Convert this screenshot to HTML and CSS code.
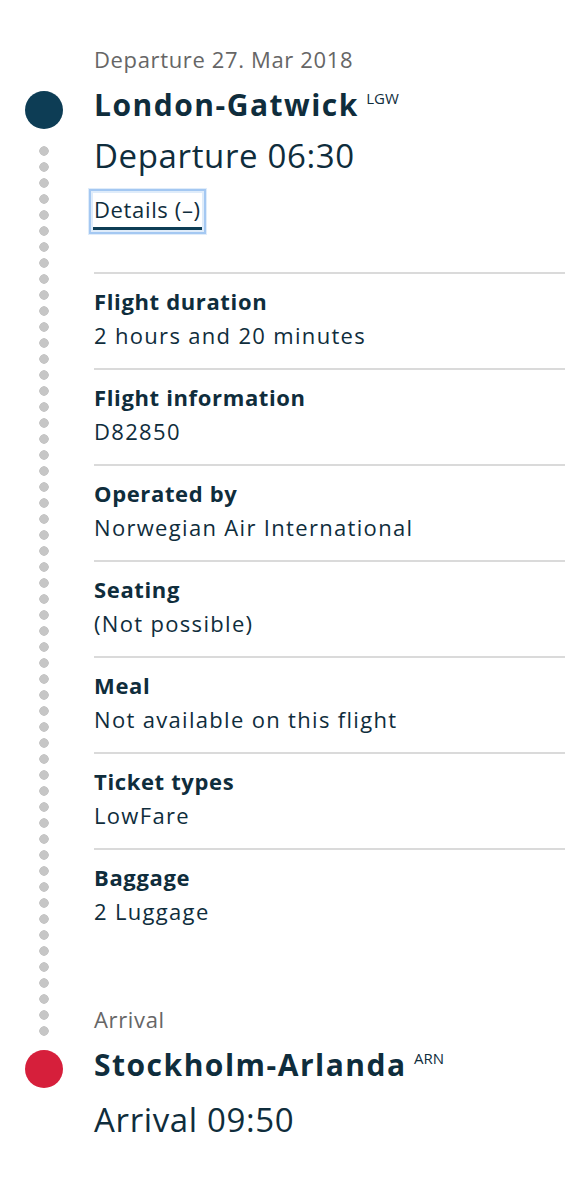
FILE: index.html
```html
<!DOCTYPE html>
<html lang="en">
<head>
    <meta charset="UTF-8">
    <meta name="viewport" content="width=device-width, initial-scale=1.0">
    <title>Flight details</title>
    <link rel="stylesheet" href="styles.css">
</head>
<body>
    <div class="trip">
        <!-- Departure -->
        <div class="when">Departure 27. Mar 2018</div>

        <div class="stop-dot dep"></div>
        <div class="airport">London-Gatwick <sup>LGW</sup></div>

        <div class="rail"></div>
        <div class="middle">
            <div class="time">Departure 06:30</div>
            <div class="details-row">
                <a href="#" class="details">Details (&ndash;)</a>
            </div>

            <!-- Details list -->
            <ul class="info">
                <li>
                    <div class="label">Flight duration</div>
                    <div class="value">2 hours and 20 minutes</div>
                </li>
                <li>
                    <div class="label">Flight information</div>
                    <div class="value">D82850</div>
                </li>
                <li>
                    <div class="label">Operated by</div>
                    <div class="value">Norwegian Air International</div>
                </li>
                <li>
                    <div class="label">Seating</div>
                    <div class="value">(Not possible)</div>
                </li>
                <li>
                    <div class="label">Meal</div>
                    <div class="value">Not available on this flight</div>
                </li>
                <li>
                    <div class="label">Ticket types</div>
                    <div class="value">LowFare</div>
                </li>
                <li class="last">
                    <div class="label">Baggage</div>
                    <div class="value">2 Luggage</div>
                </li>
            </ul>

            <div class="when arr-when">Arrival</div>
        </div>

        <!-- Arrival -->
        <div class="stop-dot arr"></div>
        <div class="airport">Stockholm-Arlanda <sup>ARN</sup></div>

        <div class="time end">Arrival 09:50</div>
    </div>
</body>
</html>
```

FILE: styles.css
```css
body{
    margin: 0;
    background: white;
    font-family: "Open Sans", Lato, sans-serif;
    color: #0f2d3c;
    letter-spacing: 0.04em;
}
.trip{
    display: grid;
    grid-template-columns: 88px 1fr;
    column-gap: 6px;
    padding-top: 41px;
}
.when{
    grid-column: 2;
    font-size: 22px;
    line-height: 36px;
    color: #666666;
}
.airport{
    grid-column: 2;
    font-size: 30px;
    font-weight: 700;
    line-height: 42px;
    padding-bottom: 10px;
    letter-spacing: 0.05em;
}
.airport sup{
    font-size: 15px;
    font-weight: 400;
    vertical-align: 12px;
    margin-left: -2px;
    letter-spacing: 0;
}
.stop-dot{
    grid-column: 1;
    justify-self: center;
    width: 38px;
    height: 38px;
    border-radius: 50%;
    margin-top: 14px;
}
.stop-dot.dep{
    background: #0d3d55;
}
.stop-dot.arr{
    background: #d61f3b;
    margin-top: 13px;
}
.rail{
    grid-column: 1;
    justify-self: center;
    width: 10px;
    margin: 7px 0 0;
    background: radial-gradient(circle, #c6c6c6 4.5px, transparent 5px) center top / 10px 16px repeat-y;
}
.middle{
    grid-column: 2;
}
.time{
    font-size: 33px;
    line-height: 40px;
    padding-bottom: 8px;
}
.time.end{
    grid-column: 2;
    margin-top: 4px;
}
.details-row{
    padding-top: 9px;
    height: 79px;
}
.details{
    display: inline-block;
    font-size: 22px;
    line-height: 32px;
    color: #0f2d3c;
    text-decoration: none;
    padding: 0 1px 2px;
    margin-left: -1px;
    border-bottom: 3px solid #0d3d55;
    outline: 2px solid #a4c8f2;
    outline-offset: 2px;
    box-shadow: 0 0 0 5px rgba(164, 200, 242, 0.35);
}
.info{
    list-style: none;
    margin: 0;
    padding: 0;
}
.info li{
    border-top: 2px solid #dadada;
    padding: 10px 0 16px;
    font-size: 22px;
    line-height: 34px;
}
.info li.last{
    padding-bottom: 0;
}
.label{
    font-weight: 700;
}
.value{
    letter-spacing: 0.06em;
}
.arr-when{
    margin-top: 73px;
}
```
